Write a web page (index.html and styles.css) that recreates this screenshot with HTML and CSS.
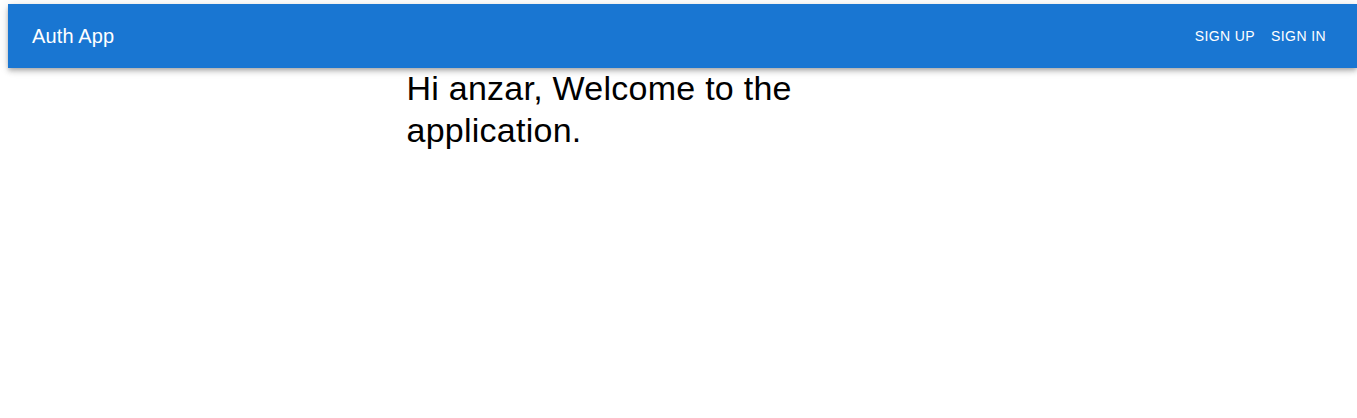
FILE: index.html
```
<!DOCTYPE html>
<html lang="en">
<head>
<meta charset="utf-8">
<meta name="viewport" content="width=device-width, initial-scale=1">
<title>Auth App</title>
<link rel="stylesheet" href="styles.css">
</head>
<body>
<header class="app-bar">
  <div class="brand">Auth App</div>
  <nav class="actions">
    <button type="button" class="nav-button">Sign Up</button>
    <button type="button" class="nav-button">Sign In</button>
  </nav>
</header>
<main class="content">
  <h1 class="greeting">Hi anzar, Welcome to the application.</h1>
</main>
</body>
</html>
```

FILE: styles.css
```
* {
  box-sizing: border-box;
}

body {
  margin: 0;
  padding: 4px 0 0 8px;
  background: #fff;
  color: #000;
  font-family: "Liberation Sans", Arial, sans-serif;
}

.app-bar {
  display: flex;
  align-items: center;
  justify-content: space-between;
  min-height: 64px;
  padding: 0 23px 0 24px;
  background: #1976d2;
  color: #fff;
  box-shadow: 0 2px 4px -1px rgba(0, 0, 0, 0.2), 0 4px 5px 0 rgba(0, 0, 0, 0.14), 0 1px 10px 0 rgba(0, 0, 0, 0.12);
}

.brand {
  font-size: 20px;
  line-height: 32px;
  letter-spacing: 0.0075em;
}

.actions {
  display: flex;
}

.nav-button {
  min-width: 64px;
  padding: 6px 8px;
  border: 0;
  border-radius: 4px;
  background: transparent;
  color: inherit;
  font-family: inherit;
  font-size: 14px;
  line-height: 24px;
  letter-spacing: 0.02857em;
  text-transform: uppercase;
  cursor: pointer;
}

.content {
  width: 100%;
  max-width: 600px;
  margin: 0 auto;
  padding: 0 24px;
}

.greeting {
  margin: 0;
  font-size: 34px;
  font-weight: 400;
  line-height: 1.235;
  letter-spacing: 0.00735em;
}
```
